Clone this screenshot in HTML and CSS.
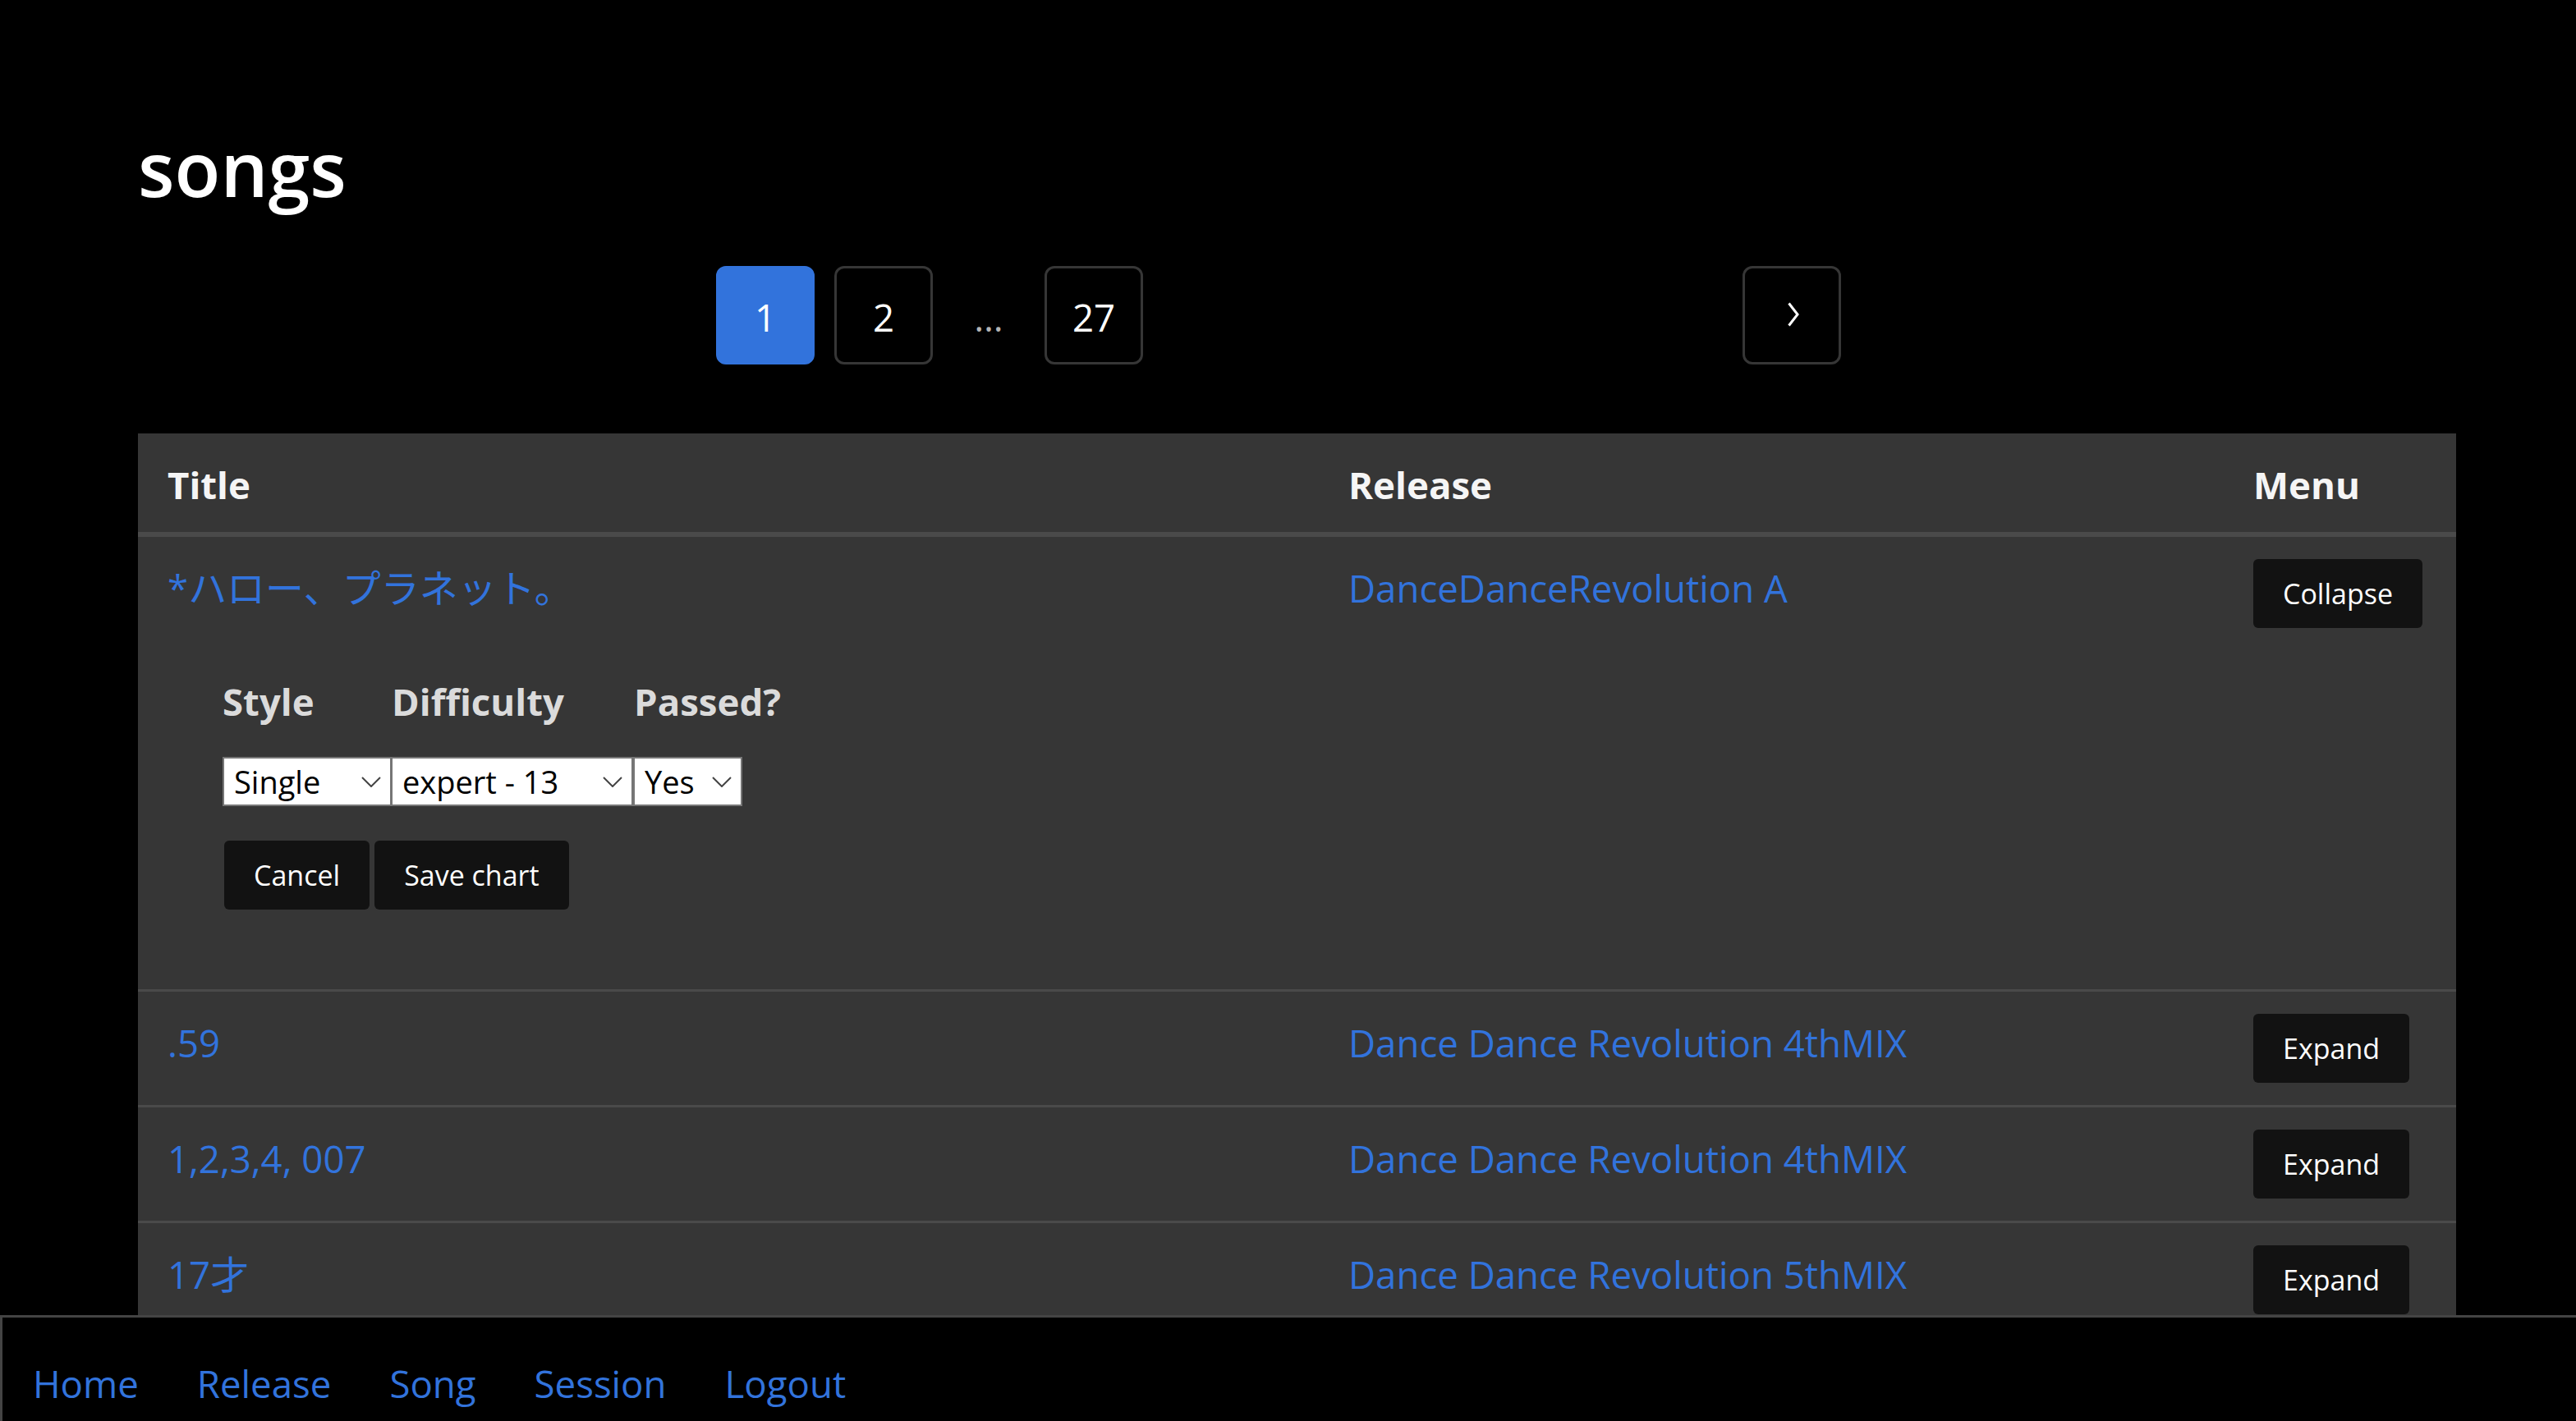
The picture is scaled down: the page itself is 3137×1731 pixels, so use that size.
FILE: index.html
```html
<!DOCTYPE html>
<html lang="en">
<head>
<meta charset="utf-8">
<title>songs</title>
<link rel="stylesheet" href="styles.css">
</head>
<body>
<section class="page">
  <h1 class="title">songs</h1>
  <nav class="pagination">
    <ul class="pagination-list">
      <li><a class="page-link is-current" href="#">1</a></li>
      <li><a class="page-link" href="#">2</a></li>
      <li><span class="ellipsis">&hellip;</span></li>
      <li><a class="page-link" href="#">27</a></li>
    </ul>
    <a class="page-link next" href="#"><svg class="next-icon" width="14" height="30" viewBox="0 0 14 30"><polyline points="1.5,1.5 12,15 1.5,28.5" fill="none" stroke="#fff" stroke-width="3"/></svg></a>
  </nav>
  <table class="songs">
    <colgroup>
      <col class="col-title">
      <col class="col-release">
      <col class="col-menu">
    </colgroup>
    <thead>
      <tr><th>Title</th><th>Release</th><th>Menu</th></tr>
    </thead>
    <tbody>
      <tr>
        <td>
          <a class="link" href="#">*<span class="jp">ハロー、プラネット。</span></a>
          <form class="chart-form">
            <div class="chart-grid">
              <div class="chart-head">Style</div>
              <div class="chart-head">Difficulty</div>
              <div class="chart-head">Passed?</div>
              <span class="select-wrap w1"><select class="sel"><option>Single</option></select><svg class="chev" width="24" height="13" viewBox="0 0 24 13"><polyline points="1,1 12,12 23,1" fill="none" stroke="#444" stroke-width="2"/></svg></span>
              <span class="select-wrap w2"><select class="sel"><option>expert - 13</option></select><svg class="chev" width="24" height="13" viewBox="0 0 24 13"><polyline points="1,1 12,12 23,1" fill="none" stroke="#444" stroke-width="2"/></svg></span>
              <span class="select-wrap w3"><select class="sel"><option>Yes</option></select><svg class="chev" width="24" height="13" viewBox="0 0 24 13"><polyline points="1,1 12,12 23,1" fill="none" stroke="#444" stroke-width="2"/></svg></span>
            </div>
            <div class="form-actions">
              <button type="button" class="btn">Cancel</button>
              <button type="button" class="btn">Save chart</button>
            </div>
          </form>
        </td>
        <td><a class="link" href="#">DanceDanceRevolution A</a></td>
        <td><button type="button" class="btn menu-btn">Collapse</button></td>
      </tr>
      <tr>
        <td><a class="link" href="#">.59</a></td>
        <td><a class="link" href="#">Dance Dance Revolution 4thMIX</a></td>
        <td><button type="button" class="btn menu-btn">Expand</button></td>
      </tr>
      <tr>
        <td><a class="link" href="#">1,2,3,4, 007</a></td>
        <td><a class="link" href="#">Dance Dance Revolution 4thMIX</a></td>
        <td><button type="button" class="btn menu-btn">Expand</button></td>
      </tr>
      <tr>
        <td><a class="link" href="#">17<span class="jp">才</span></a></td>
        <td><a class="link" href="#">Dance Dance Revolution 5thMIX</a></td>
        <td><button type="button" class="btn menu-btn">Expand</button></td>
      </tr>
    </tbody>
  </table>
</section>
<footer class="navbar">
  <a class="nav-link" href="#">Home</a>
  <a class="nav-link" href="#">Release</a>
  <a class="nav-link" href="#">Song</a>
  <a class="nav-link" href="#">Session</a>
  <a class="nav-link" href="#">Logout</a>
</footer>
</body>
</html>
```
FILE: styles.css
```css
* { box-sizing: border-box; }

html, body {
  margin: 0;
  background: #000;
}

body {
  font-family: "Segoe UI", "Open Sans", "Noto Sans CJK JP", sans-serif;
  font-size: 45.6px;
  line-height: 72px;
  color: #dbdbdb;
}

.page {
  padding: 151px 146px 200px 168px;
}

.title {
  margin: 0 0 65px;
  font-size: 91.5px;
  line-height: 108px;
  font-weight: 600;
  color: #fff;
}

/* pagination */
.pagination {
  display: flex;
  align-items: center;
  margin-left: 704px;
  width: 1370px;
  height: 120px;
}

.pagination-list {
  display: flex;
  align-items: center;
  gap: 24px;
  list-style: none;
  margin: 0;
  padding: 0;
}

.page-link {
  display: flex;
  align-items: center;
  justify-content: center;
  width: 120px;
  height: 120px;
  padding-top: 3px;
  border: 3px solid #363636;
  border-radius: 12px;
  color: #fff;
  text-decoration: none;
  font-size: 45.6px;
}

.page-link.is-current {
  background: #3273dc;
  border-color: #3273dc;
}

.page-link.next {
  margin-left: auto;
  padding-top: 0;
}

.next-icon {
  display: block;
  margin-left: 4px;
  margin-bottom: 2px;
}

.ellipsis {
  display: block;
  width: 88px;
  padding-top: 3px;
  text-align: center;
  color: #b5b5b5;
}

/* table */
.songs {
  width: 100%;
  margin-top: 84px;
  border-collapse: collapse;
  table-layout: fixed;
  background: #363636;
}

.col-title { width: 1438px; }
.col-release { width: 1102px; }
.col-menu { width: 283px; }

.songs th {
  padding: 26px 36px 22px;
  text-align: left;
  font-weight: 700;
  color: #f5f5f5;
  border-bottom: 6px solid #4a4a4a;
}

.songs td {
  padding: 26px 36px 22px;
  vertical-align: top;
  border-bottom: 3px solid #4a4a4a;
}

.link {
  color: #3273dc;
  text-decoration: none;
  white-space: nowrap;
}

.jp {
  font-family: "Noto Sans CJK JP", sans-serif;
  font-size: 47px;
  line-height: 1;
}

/* expanded chart form */
.chart-form {
  margin: 64px 0 75px 67px;
}

.chart-grid {
  display: grid;
  grid-template-columns: 206px 295px auto;
  justify-content: start;
  row-gap: 34px;
}

.chart-head {
  font-weight: 700;
  color: #dbdbdb;
  padding-top: 2px;
  margin-bottom: -2px;
}

.select-wrap {
  position: relative;
  display: block;
  height: 60px;
}

.select-wrap.w1 { width: 206px; }
.select-wrap.w2 { width: 295px; margin-left: -1px; }
.select-wrap.w3 { width: 133px; margin-left: -1px; }

.sel {
  appearance: none;
  -webkit-appearance: none;
  display: block;
  width: 100%;
  height: 60px;
  margin: 0;
  padding: 0 40px 0 12px;
  border: 2px solid #767676;
  border-radius: 0;
  background: #fff;
  color: #000;
  font-family: "Segoe UI", "Open Sans", sans-serif;
  font-size: 38px;
  line-height: 56px;
}

.chev {
  position: absolute;
  right: 13px;
  top: 24px;
}

.form-actions {
  display: flex;
  gap: 6px;
  margin-top: 42px;
  margin-left: 2px;
}

.btn {
  height: 84px;
  padding: 0 36px;
  border: none;
  border-radius: 6px;
  background: #121212;
  color: #fff;
  font-family: "Segoe UI", "Open Sans", sans-serif;
  font-size: 34px;
  line-height: 84px;
  cursor: pointer;
}

.menu-btn {
  display: block;
  margin: 1px 0 5px;
}

/* bottom navbar */
.navbar {
  position: fixed;
  left: 0;
  right: 0;
  bottom: 0;
  height: 129px;
  display: flex;
  align-items: flex-start;
  gap: 71px;
  padding: 44px 0 0 37px;
  background: #000;
  border-top: 3px solid #444;
  border-left: 3px solid #444;
}

.nav-link {
  color: #3273dc;
  text-decoration: none;
  font-size: 45.6px;
  line-height: 72px;
}
```
